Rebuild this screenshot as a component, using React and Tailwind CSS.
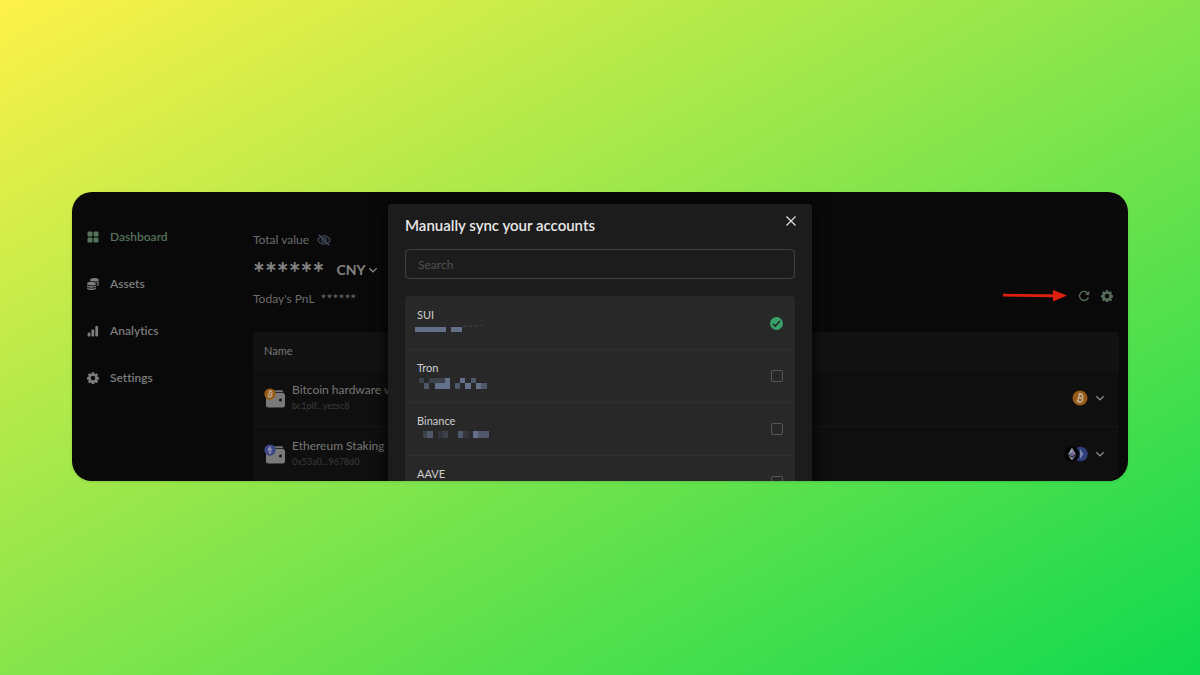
import { useState } from 'react';

const navItems = [
  { label: 'Dashboard', icon: DashboardIcon, active: true },
  { label: 'Assets', icon: CoinsIcon },
  { label: 'Analytics', icon: BarsIcon },
  { label: 'Settings', icon: GearIcon },
];

const wallets = [
  { name: 'Bitcoin hardware wallet', address: 'bc1plf...yezsc8', coin: 'btc' },
  { name: 'Ethereum Staking', address: '0x53a0...9678d0', coin: 'eth' },
];

const HI = '#64708a';
const MID = '#4e586a';
const LOW = '#3c424c';

// masked addresses, [x, y, width, height, fill]
const accounts = [
  {
    name: 'SUI',
    mask: [
      [-2, 2, 31, 5, HI], [34, 2, 11, 5, HI], [46, 0, 4, 2, '#34373c'], [52, 0, 3, 2, '#34373c'],
      [57, 0, 3, 2, '#34373c'], [62, 0, 5, 1, '#34373c'],
    ],
  },
  {
    name: 'Tron',
    mask: [
      [2, 0, 5, 5, LOW], [7, 5, 5, 6, MID], [12, 0, 6, 5, LOW], [18, 0, 10, 5, LOW], [28, 0, 5, 5, HI],
      [18, 5, 15, 6, HI], [38, 5, 5, 6, MID], [43, 0, 5, 5, HI], [48, 5, 6, 6, HI], [54, 0, 5, 5, MID],
      [59, 5, 5, 6, HI], [64, 5, 6, 6, MID],
    ],
  },
  {
    name: 'Binance',
    mask: [
      [6, 0, 4, 7, LOW], [10, 0, 6, 7, MID], [21, 0, 5, 7, '#33373c'], [26, 0, 5, 7, LOW], [41, 0, 5, 7, MID],
      [46, 0, 6, 7, '#33373c'], [56, 0, 5, 7, HI], [61, 0, 6, 7, MID], [67, 0, 5, 7, MID],
    ],
  },
  { name: 'AAVE', mask: [] },
];

function DashboardIcon() {
  return (
    <svg className="size-3" viewBox="0 0 12 12" fill="currentColor">
      <rect x="0.5" y="0.5" width="5" height="5" rx="1.2" />
      <rect x="6.5" y="0.5" width="5" height="5" rx="1.2" />
      <rect x="0.5" y="6.5" width="5" height="5" rx="1.2" />
      <rect x="6.5" y="6.5" width="5" height="5" rx="1.2" />
    </svg>
  );
}

function CoinsIcon() {
  return (
    <svg className="size-3" viewBox="0 0 512 512" fill="currentColor">
      <path d="M512 80c0 18-14.300 34.600-38.400 48-29.100 16.100-72.500 27.500-122.300 30.900-3.700-1.800-7.400-3.500-11.300-5C300.600 137.400 248.200 128 192 128c-8.300 0-16.400.2-24.500.6l-1.100-.6C142.300 114.600 128 98 128 80c0-44.200 86-80 192-80s192 35.800 192 80zM160.700 161.100c10.200-.7 20.700-1.100 31.300-1.100 62.200 0 117.400 12.300 152.500 31.400C369.300 204.900 384 221.700 384 240c0 4-.7 7.900-2.100 11.700-4.600 13.200-17 25.300-35 35.500-.1.100-.3.100-.4.200-.3.200-.6.300-.9.500-35 19.400-90.800 32-153.600 32-59.600 0-112.900-11.300-148.200-29.100-1.900-.9-3.700-1.900-5.500-2.900C14.300 274.600 0 258 0 240c0-34.800 53.400-64.500 128-75.400 10.500-1.500 21.400-2.700 32.700-3.500zM416 240c0-21.900-10.600-39.900-24.100-53.400 28.300-4.400 54.200-11.400 76.200-20.500 16.300-6.800 31.500-15.200 43.900-25.500V176c0 19.300-16.500 37.100-43.800 50.900-14.600 7.400-32.400 13.700-52.400 18.500.1-1.800.2-3.500.2-5.400zM384 336c0 18-14.300 34.600-38.400 48-1.800 1-3.600 1.900-5.500 2.900C304.900 404.700 251.600 416 192 416c-62.800 0-118.600-12.600-153.600-32C14.300 370.600 0 354 0 336v-35.400c12.500 10.300 27.600 18.700 43.900 25.500C83.400 342.600 135.800 352 192 352s108.600-9.400 148.100-25.900c7.800-3.200 15.300-6.900 22.400-10.900 6.100-3.400 11.800-7.200 17.200-11.200 1.500-1.100 2.900-2.300 4.300-3.400V336zM416 278.100c19-4.200 36.500-9.500 52.100-16 16.300-6.800 31.500-15.200 43.900-25.500V272c0 10.500-5 21-14.900 30.900-16.300 16.300-45 29.700-81.300 38.400.1-1.700.2-3.500.2-5.300v-57.900zM192 448c56.200 0 108.600-9.400 148.100-25.900 16.300-6.800 31.500-15.200 43.900-25.500V432c0 44.200-86 80-192 80S0 476.200 0 432v-35.400c12.500 10.300 27.600 18.700 43.900 25.500C83.400 438.600 135.800 448 192 448z" />
    </svg>
  );
}

function BarsIcon() {
  return (
    <svg className="size-3" viewBox="0 0 12 12" fill="currentColor">
      <rect x="0.6" y="7.600" width="2.800" height="3.900" rx="0.800" />
      <rect x="4.400" y="4.600" width="2.800" height="6.900" rx="0.800" />
      <rect x="8.300" y="1" width="2.800" height="10.500" rx="0.800" />
    </svg>
  );
}

function GearIcon() {
  return (
    <svg className="size-3" viewBox="0 0 24 24" fill="currentColor" fillRule="evenodd">
      <path d="M9.800 0.500h4.400l.7 3 1.500.6 2.600-1.600 3.100 3.100-1.600 2.600.6 1.500 3 .7v4.400l-3 .7-.6 1.500 1.600 2.600-3.100 3.100-2.600-1.600-1.500.6-.7 3H9.800l-.7-3-1.500-.6-2.600 1.600-3.100-3.100 1.600-2.600-.6-1.500-3-.7V10.400l3-.7.6-1.500L1.900 5.600 5 2.500l2.600 1.600 1.500-.6zM12 7.600a4.600 4.600 0 1 0 0 9.200 4.600 4.600 0 0 0 0-9.200z" />
    </svg>
  );
}

function EyeOffIcon() {
  return (
    <svg className="size-3.5" viewBox="0 0 24 24" fill="none" stroke="currentColor" strokeWidth="2.200">
      <path d="M1.500 12C4 7 7.600 4.800 12 4.800S20 7 22.500 12C20 17 16.400 19.200 12 19.200S4 17 1.500 12z" />
      <circle cx="12" cy="12" r="3.800" />
      <path d="M3 3l18 18" strokeWidth="2.600" />
    </svg>
  );
}

function Chevron({ className }) {
  return (
    <svg className={className} viewBox="0 0 10 10" fill="none" stroke="currentColor" strokeWidth="1.400">
      <path d="M1.300 3.300L5 6.800l3.700-3.500" />
    </svg>
  );
}

function RefreshIcon() {
  return (
    <svg className="size-3" viewBox="0 0 12 12" fill="none" stroke="currentColor" strokeWidth="1.300">
      <path d="M9.700 3.300A4.500 4.500 0 1 0 10.400 7.200" />
      <path d="M11.300 0.800v4.300H7z" fill="currentColor" stroke="none" />
    </svg>
  );
}

function BitcoinMark({ className }) {
  return (
    <svg className={className} viewBox="0 0 16 16">
      <circle cx="8" cy="8" r="7.500" fill="#9a5a14" />
      <g transform="rotate(14 8 8)" fill="none" stroke="#b9aa98" strokeWidth="1.500">
        <path d="M5.400 4.600h3.400a1.600 1.600 0 0 1 0 3.300H6.600h2.700a1.700 1.700 0 0 1 0 3.500H5.400M6.600 4.600v6.800M7 3v1.500M8.900 3v1.500M7 11.500V13M8.900 11.500V13" />
      </g>
    </svg>
  );
}

function EthereumMark({ className }) {
  return (
    <svg className={className} viewBox="0 0 16 16">
      <circle cx="8" cy="8" r="7.500" fill="#3d4788" />
      <path d="M8 2.500l3.300 5.600L8 10z" fill="#7d84ad" />
      <path d="M8 2.500L4.700 8.100 8 10zM4.700 9l3.300 4.500L11.300 9 8 10.900z" fill="#9297b5" />
    </svg>
  );
}

function WalletIcon({ coin }) {
  return (
    <span className="relative block h-5 w-[22px] shrink-0">
      <svg className="size-full" viewBox="0 0 22 20">
        <path d="M9 2.600l7.500-.6q2-.1 2.500 1.400l.3 .9H9z" fill="#6f6f6f" />
        <rect x="2" y="5" width="19" height="14.500" rx="2.500" fill="#7a7a7a" />
        <circle cx="16.500" cy="12" r="1.500" fill="#111" />
      </svg>
      {coin === 'btc' ? (
        <BitcoinMark className="absolute left-0 top-0 size-3" />
      ) : (
        <EthereumMark className="absolute left-0 top-0 size-3" />
      )}
    </span>
  );
}

function EthChains() {
  return (
    <svg className="h-4 w-6" viewBox="0 0 24 16">
      <circle cx="16.500" cy="8" r="7.300" fill="#2f3d7a" />
      <path d="M16 3l3.500 5-3.500 5z" fill="#7884b0" />
      <circle cx="8" cy="8" r="7.500" fill="#030303" />
      <path d="M8 1.500L4 8.200 8 10.400z" fill="#8fa0a6" />
      <path d="M8 1.500l4 6.700-4 2.200z" fill="#8d7f9e" />
      <path d="M4 8.200l4-1.700 4 1.700-4 2.200z" fill="#6a6086" />
      <path d="M4 9.300l4 5.200V11.600z" fill="#9a8f9b" />
      <path d="M12 9.300l-4 5.200V11.600z" fill="#7477a0" />
    </svg>
  );
}

function Sidebar() {
  return (
    <nav className="flex w-[168px] shrink-0 flex-col gap-[27px] pl-[15px] pt-[35px] text-xs font-semibold">
      {navItems.map(({ label, icon: Icon, active }) => (
        <a
          key={label}
          href="#"
          className={`flex h-5 items-center gap-[11px] ${active ? 'text-[#55735a]' : 'text-[#7d7d7d]'}`}
        >
          <Icon />
          {label}
        </a>
      ))}
    </nav>
  );
}

function Summary() {
  return (
    <div className="flex items-end justify-between pt-10 text-[#6c6c6c]">
      <div>
        <div className="flex h-4 items-center gap-2 text-xs">
          Total value
          <button aria-label="Show values" className="text-[#3d4656]">
            <EyeOffIcon />
          </button>
        </div>
        <div className="mt-2 flex h-7 items-center gap-3 text-[#848484]">
          <span className="h-7 text-[28px] font-bold leading-8">******</span>
          <label className="relative flex items-center">
            <select
              aria-label="Currency"
              className="w-[42px] appearance-none bg-transparent text-sm font-bold"
            >
              <option>CNY</option>
            </select>
            <Chevron className="pointer-events-none absolute right-0 size-2.5" />
          </label>
        </div>
        <div className="mt-[7px] flex h-4 items-center gap-1.5 text-xs">
          Today's PnL <span className="text-sm leading-4">******</span>
        </div>
      </div>
      <div className="flex items-center gap-[11px] pb-[5px] pr-1.5 text-[#566b58]">
        <svg className="h-3 w-16" viewBox="0 0 64 12" fill="#dc1f0e">
          <path d="M0 3.800l50 .4V0l14 5.500-14 6V7.200L0 6.600z" />
        </svg>
        <button aria-label="Sync accounts">
          <RefreshIcon />
        </button>
        <button aria-label="Preferences">
          <GearIcon />
        </button>
      </div>
    </div>
  );
}

function WalletTable() {
  return (
    <table className="mt-[25px] w-full overflow-hidden rounded-t text-left">
      <thead className="bg-[#121212] text-[11px] text-[#777]">
        <tr className="h-[39px]">
          <th className="pl-[11px] font-normal">Name</th>
          <th aria-label="Chains" />
        </tr>
      </thead>
      <tbody className="bg-[#0f0f0f]">
        {wallets.map((wallet) => (
          <tr key={wallet.name} className="h-[55px] border-b border-[#171717]">
            <td className="pl-[11px]">
              <div className="flex items-center gap-1.5">
                <WalletIcon coin={wallet.coin} />
                <div>
                  <div className="text-xs leading-4 text-[#777]">{wallet.name}</div>
                  <div className="text-[9px] leading-4 text-[#3b3b3b]">{wallet.address}</div>
                </div>
              </div>
            </td>
            <td>
              <div className="flex items-center justify-end gap-[7px] pr-3.5 text-[#848484]">
                {wallet.coin === 'btc' ? <BitcoinMark className="size-4" /> : <EthChains />}
                <button aria-label={`Expand ${wallet.name}`}>
                  <Chevron className="size-2.5" />
                </button>
              </div>
            </td>
          </tr>
        ))}
      </tbody>
    </table>
  );
}

function AccountRow({ account, checked, onToggle }) {
  return (
    <label className="flex h-[53px] items-center justify-between border-t border-[#303030] px-3 first:border-transparent">
      <span className="block h-8">
        <span className="block text-[11px] leading-4 text-[#cfcfcf]">{account.name}</span>
        <svg
          className="mt-0.5 block h-3 w-20 overflow-visible"
          viewBox="0 0 80 12"
          shapeRendering="crispEdges"
        >
          {account.mask.map(([x, y, w, h, fill]) => (
            <rect key={`${x}-${y}`} x={x} y={y} width={w} height={h} fill={fill} />
          ))}
        </svg>
      </span>
      <span className="relative flex">
        <input
          type="checkbox"
          checked={checked}
          onChange={onToggle}
          className="size-3 appearance-none rounded-xs border border-[#565656] checked:size-[13px] checked:rounded-full checked:border-0 checked:bg-[#38a169]"
        />
        {checked && (
          <svg
            className="pointer-events-none absolute inset-0 size-[13px]"
            viewBox="0 0 13 13"
            fill="none"
            stroke="#272727"
            strokeWidth="1.500"
          >
            <path d="M2.800 6.800l2.500 2.300 4.700-5" />
          </svg>
        )}
      </span>
    </label>
  );
}

function SyncModal() {
  const [selected, setSelected] = useState(['SUI']);

  const toggle = (name) => {
    setSelected((prev) =>
      prev.includes(name) ? prev.filter((item) => item !== name) : [...prev, name]
    );
  };

  return (
    <div
      role="dialog"
      aria-label="Manually sync your accounts"
      className="absolute inset-x-0 top-3 mx-auto w-[424px] rounded bg-[#1c1c1c] px-[17px] pt-[7px] shadow-[0_0_16px_#000]"
    >
      <div className="flex items-start justify-between">
        <h2 className="pt-1 text-[15px] font-semibold leading-5 text-[#e8e8e8]">
          Manually sync your accounts
        </h2>
        <button aria-label="Close" className="mt-1 -mr-0.5 text-[#dcdcdc]">
          <svg className="size-3" viewBox="0 0 12 12" stroke="currentColor" strokeWidth="1.300">
            <path d="M1.500 1.500l9 9M10.500 1.500l-9 9" />
          </svg>
        </button>
      </div>
      <input
        type="text"
        aria-label="Search"
        placeholder="Search"
        className="mt-3.5 h-[30px] w-full rounded border border-[#404040] bg-transparent px-3 text-xs text-[#e8e8e8] placeholder:text-[#505050]"
      />
      <div className="mt-[17px] rounded-t bg-[#282828]">
        {accounts.map((account) => (
          <AccountRow
            key={account.name}
            account={account}
            checked={selected.includes(account.name)}
            onToggle={() => toggle(account.name)}
          />
        ))}
      </div>
    </div>
  );
}

export default function App() {
  return (
    <div className="min-h-screen bg-[linear-gradient(to_bottom_right,#fef148,#0fd94f)] px-[6%] pt-48 font-['Lato',sans-serif] [font-variant-ligatures:none]">
      <div className="relative h-[289px] overflow-hidden rounded-[20px] bg-[#090909] shadow-sm">
        <div className="flex">
          <Sidebar />
          <main className="min-w-0 grow pl-[13px] pr-[9px]">
            <Summary />
            <WalletTable />
          </main>
        </div>
        <SyncModal />
      </div>
    </div>
  );
}
